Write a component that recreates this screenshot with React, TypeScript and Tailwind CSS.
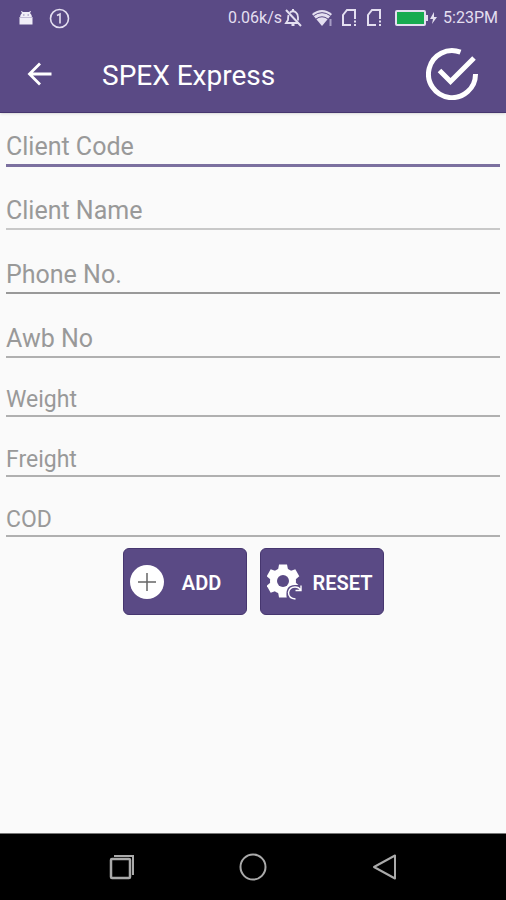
import { useState } from "react";

type Field = { id: string; label: string; size: "lg" | "sm"; line: string };

const FIELDS: Field[] = [
  { id: "clientCode", label: "Client Code", size: "lg", line: "border-b-[3px] border-[#7b709f]" },
  { id: "clientName", label: "Client Name", size: "lg", line: "border-b-2 border-[#c8c8c8]" },
  { id: "phone", label: "Phone No.", size: "lg", line: "border-b-2 border-[#999999]" },
  { id: "awb", label: "Awb No", size: "lg", line: "border-b-2 border-[#b0b0b0]" },
  { id: "weight", label: "Weight", size: "sm", line: "border-b-2 border-[#b0b0b0]" },
  { id: "freight", label: "Freight", size: "sm", line: "border-b-2 border-[#b0b0b0]" },
  { id: "cod", label: "COD", size: "sm", line: "border-b-2 border-[#b0b0b0]" },
];

function SimIcon() {
  return (
    <svg width="16" height="20" viewBox="0 0 16 20" fill="none" stroke="#e4dff0" strokeWidth="2">
      <path d="M10 17H2V7l4-5h8v9" />
      <path d="M14 12.500v2M14 16v2" />
    </svg>
  );
}

function StatusBar() {
  return (
    <div className="flex h-9 items-center pl-[18px] pr-2 text-base text-[#e4dff0]">
      <svg width="16" height="16" viewBox="0 0 16 16" fill="#f1eef8">
        <path d="M3.500 1l1.500 1h6l1.500-1 .5.500-1 1.500Q14 4.500 14 7.500H2Q2 4.500 4 3L3 1.500z" />
        <path d="M1.500 7h13v7.500h-13z" />
        <path d="M5 4.500h1.500v1H5zM9.500 4.500H11v1H9.500z" fill="#8d80ad" />
        <path d="M2 7.500h12" stroke="#b9b0cf" strokeWidth="0.800" />
      </svg>
      <svg className="ml-[15px]" width="21" height="21" viewBox="0 0 21 21" fill="none" stroke="#e4dff0" strokeWidth="1.600">
        <circle cx="10.500" cy="10.500" r="9" />
        <path d="M8 7.500l3-1.500v9.500" />
      </svg>
      <span className="ml-auto">0.06k/s</span>
      <svg className="ml-0.5" width="19" height="20" viewBox="0 0 19 20" fill="none" stroke="#e4dff0" strokeWidth="1.800">
        <path d="M6 4.500Q9 2 12 4.500q2 1.500 2 5v3M4.500 7Q4 9 4 12l-2 3h12" />
        <path d="M9 1v2M2 2l15 16M7.500 17h3" strokeWidth="2" />
      </svg>
      <svg className="ml-[9px]" width="22" height="18" viewBox="0 0 22 18">
        <path d="M0 5Q10-3 20 5L10 17z" fill="#e4dff0" />
        <path d="M1.500 6.800Q10 .5 18.500 6.800M4 10q6-4.500 12 0" fill="none" stroke="#5a4a85" strokeWidth="1" />
        <path d="M18.500 10v7" stroke="#a79cc4" strokeWidth="2" />
      </svg>
      <span className="ml-[7px] flex gap-[9px]">
        <SimIcon />
        <SimIcon />
      </span>
      <svg className="ml-[13px]" width="43" height="18" viewBox="0 0 43 18">
        <rect x="1" y="2" width="29" height="14" rx="1" fill="#17ab50" stroke="#e4dff0" strokeWidth="2" />
        <path d="M31 6h2v6h-2z" fill="#e4dff0" />
        <path d="M39 3l-4 7h3l-1 5 5-7h-3z" fill="#e4dff0" />
      </svg>
      <span className="ml-[5px]">5:23PM</span>
    </div>
  );
}

function Toolbar() {
  return (
    <div className="flex h-[76px] items-center pl-[26px] pr-7">
      <button type="button" aria-label="Back">
        <svg width="28" height="28" viewBox="0 0 28 28" fill="none" stroke="#fff" strokeWidth="2.800">
          <path d="M25.500 14H4.500M14 3.500L3.500 14 14 24.500" />
        </svg>
      </button>
      <h1 className="ml-12 pt-1 text-[28px] text-white">SPEX Express</h1>
      <button type="button" aria-label="Submit" className="ml-auto">
        <svg width="52" height="52" viewBox="0 0 52 52" fill="none" stroke="#fff" strokeWidth="5">
          <path d="M34.500 4.200A23.500 23.500 0 1 0 49.500 26" />
          <path d="M13.500 22.500L24.500 33.500 48 10" />
        </svg>
      </button>
    </div>
  );
}

function PlusIcon() {
  return (
    <svg width="34" height="34" viewBox="0 0 34 34">
      <circle cx="17" cy="17" r="17" fill="#fff" />
      <path d="M17 8v18M8 17h18" stroke="#666" strokeWidth="1.500" />
    </svg>
  );
}

function GearIcon() {
  return (
    <svg width="36" height="36" viewBox="0 0 36 36">
      <g fill="#fff">
        <circle cx="16" cy="17" r="13" />
        <path id="tooth" d="M12 0.500h8l1.500 8h-11z" />
        <use href="#tooth" transform="rotate(60 16 17)" />
        <use href="#tooth" transform="rotate(120 16 17)" />
        <use href="#tooth" transform="rotate(180 16 17)" />
        <use href="#tooth" transform="rotate(240 16 17)" />
        <use href="#tooth" transform="rotate(300 16 17)" />
      </g>
      <circle cx="16" cy="17" r="6" fill="#5a4a85" />
      <path d="M20 36q-3-15 8-15h7v15z" fill="#5a4a85" />
      <path d="M28.500 35q-7-.5-7-6.500 1-5.500 6.500-5.500 4 0 5.500 3M34 21.500v5h-5.500" fill="none" stroke="#fff" strokeWidth="1.400" />
    </svg>
  );
}

export default function App() {
  const [values, setValues] = useState<Record<string, string>>({});

  return (
    <div className="flex min-h-screen flex-col bg-[#fafafa] font-[Roboto,sans-serif]">
      <header className="border-b border-[#46366f] bg-[#5a4a85] shadow">
        <StatusBar />
        <Toolbar />
      </header>

      <form className="-mt-px flex-1" onSubmit={(e) => e.preventDefault()}>
        <div className="px-1.5">
          {FIELDS.map((f) => (
            <div key={f.id} className={f.size === "lg" ? "h-16 pt-4" : "h-[60px] pt-4"}>
              <input
                id={f.id}
                aria-label={f.label}
                placeholder={f.label}
                value={values[f.id] ?? ""}
                onChange={(e) => setValues({ ...values, [f.id]: e.target.value })}
                className={`block w-full box-content bg-transparent pt-0.5 text-[#444] outline-none placeholder:text-[#999] ${f.line} ${
                  f.size === "lg" ? "h-[34px] text-[25px]" : "h-[29px] text-[23px]"
                }`}
              />
            </div>
          ))}
        </div>
        <div className="flex justify-center gap-[13px] text-xl font-semibold text-white">
          <button type="submit" className="flex h-[67px] w-[124px] items-center rounded-md border border-[#46366f] bg-[#5a4a85] px-1.5">
            <PlusIcon />
            <span className="flex-1 pt-0.5">ADD</span>
          </button>
          <button type="button" onClick={() => setValues({})} className="flex h-[67px] w-[124px] items-center rounded-md border border-[#46366f] bg-[#5a4a85] pl-1.5">
            <GearIcon />
            <span className="flex-1 pt-0.5">RESET</span>
          </button>
        </div>
      </form>

      <nav className="grid h-[67px] grid-cols-3 place-items-center border-t border-[#777] bg-black px-14">
        <button type="button" aria-label="Recent apps">
          <svg width="26" height="26" viewBox="0 0 26 26" fill="none" stroke="#aaa" strokeWidth="2">
            <rect x="2" y="5" width="19" height="19" rx="1" strokeWidth="2.500" />
            <path d="M5 2h19v19" />
          </svg>
        </button>
        <button type="button" aria-label="Home">
          <svg width="28" height="28" viewBox="0 0 28 28" fill="none" stroke="#aaa" strokeWidth="2">
            <circle cx="14" cy="14" r="12.500" />
          </svg>
        </button>
        <button type="button" aria-label="Back to previous screen">
          <svg width="26" height="28" viewBox="0 0 26 28" fill="none" stroke="#aaa" strokeWidth="2" strokeLinejoin="round">
            <path d="M24 2.500v23L3 14z" />
          </svg>
        </button>
      </nav>
    </div>
  );
}
